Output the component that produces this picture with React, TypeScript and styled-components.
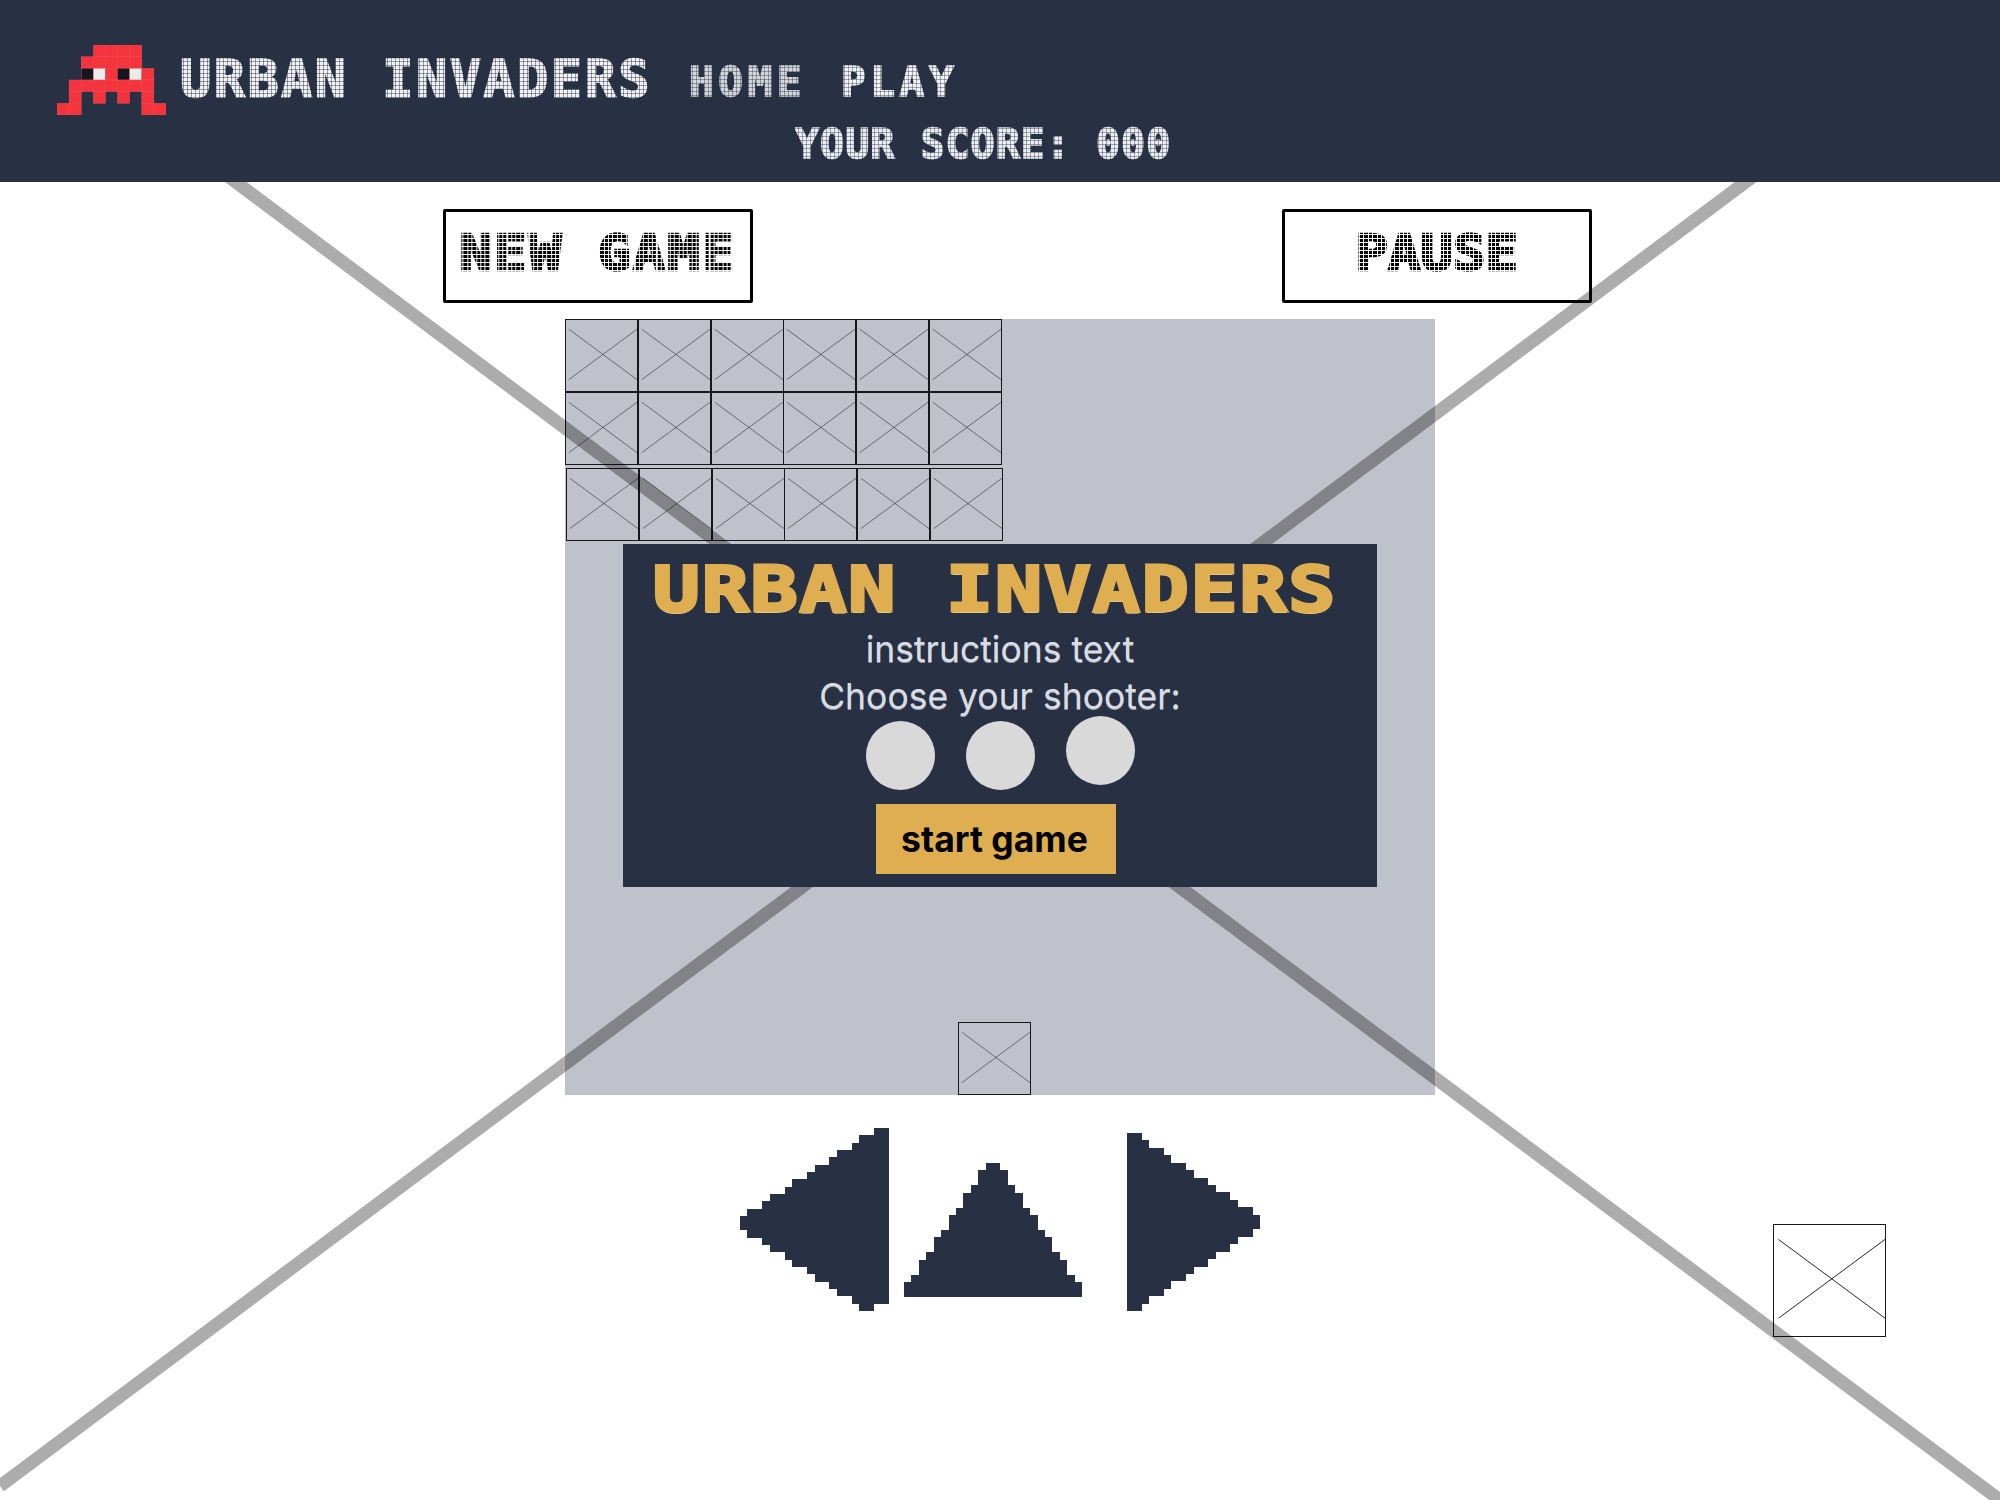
import styled, { createGlobalStyle, css } from "styled-components";

const NAVY = "#283044";
const GOLD = "#deae50";
const MONO = '"DejaVu Sans Mono", "Liberation Mono", monospace';

const GlobalStyle = createGlobalStyle`
  html, body {
    margin: 0;
    background: #ffffff;
  }
  * {
    box-sizing: border-box;
  }
`;

// dot grid laid over the letters, the mask keeps the text real
const pixelDots = (gap: number, stroke: number) => css`
  font-family: ${MONO};
  font-weight: 700;
  line-height: 1;
  white-space: pre;
  -webkit-text-stroke: ${stroke}px currentColor;
  mask-image:
    repeating-linear-gradient(90deg, #000 0 3px, rgba(0, 0, 0, ${gap}) 3px 4px),
    repeating-linear-gradient(0deg, #000 0 3px, rgba(0, 0, 0, ${gap}) 3px 4px);
  mask-composite: intersect;
  -webkit-mask-composite: source-in;
`;

const Page = styled.div`
  position: relative;
  width: 2000px;
  height: 1500px;
  overflow: hidden;
  display: flex;
  flex-direction: column;
`;

const BackdropCross = styled.svg`
  position: absolute;
  inset: 0;
  z-index: 1;
  pointer-events: none;
`;

const Header = styled.header`
  position: relative;
  z-index: 2;
  height: 182px;
  flex: none;
  display: flex;
  gap: 14px;
  padding: 45px 0 0 57px;
  background: ${NAVY};
`;

const Logo = styled.svg`
  width: 109px;
  height: 70px;
  flex: none;
`;

const HeaderText = styled.div`
  display: flex;
  flex-direction: column;
`;

const TopRow = styled.div`
  display: flex;
  align-items: flex-start;
`;

const Brand = styled.div`
  ${pixelDots(0.55, 1.6)}
  margin-top: 8px;
  font-size: 52px;
  letter-spacing: 2.4px;
  color: #f2f3f5;
`;

const NavLink = styled.a<{ $dim?: boolean }>`
  ${pixelDots(0.6, 1.6)}
  margin-top: 17px;
  margin-left: ${(p) => (p.$dim ? 37 : 35)}px;
  font-size: 41px;
  letter-spacing: 4.6px;
  color: ${(p) => (p.$dim ? "#d4d5d8" : "#f2f3f5")};
`;

const Score = styled.div`
  ${pixelDots(0.6, 1.6)}
  margin: 19px 0 0 615px;
  font-size: 40px;
  letter-spacing: 1px;
  color: #eceef2;
`;

const Toolbar = styled.div`
  display: flex;
  gap: 529px;
  padding: 27px 0 0 443px;
`;

const GameButton = styled.button`
  display: flex;
  justify-content: center;
  align-items: flex-start;
  width: 310px;
  height: 94px;
  padding: 17px 0 0;
  border: 3px solid #000000;
  border-radius: 2px;
  background: #ffffff;
`;

const ButtonLabel = styled.span<{ $spacing: number }>`
  ${pixelDots(0.05, 2.5)}
  display: block;
  font-size: 49px;
  letter-spacing: ${(p) => p.$spacing}px;
  color: #000000;
  transform: scaleX(1.1);
`;

const Board = styled.section`
  position: relative;
  width: 870px;
  height: 776px;
  flex: none;
  margin: 16px 0 0 565px;
  display: flex;
  flex-direction: column;
  background: #bfc2ca;
`;

const CellRow = styled.div<{ $shifted?: boolean }>`
  display: grid;
  grid-template-columns: repeat(6, 72.8px);
  margin: ${(p) => (p.$shifted ? "3px 0 0 1px" : "0")};
`;

const Placeholder = styled.div<{ $size: number }>`
  width: ${(p) => p.$size}px;
  height: ${(p) => p.$size}px;
  border: 1px solid #15171c;
  flex: none;
`;

const PlaceholderCross = styled.svg<{ $soft?: boolean }>`
  display: block;
  width: 100%;
  height: 100%;
  stroke: ${(p) => (p.$soft ? "rgba(30, 32, 40, 0.55)" : "#24262c")};
`;

const Ship = styled.div`
  margin: auto 0 0 393px;
`;

const Popup = styled.div`
  position: absolute;
  z-index: 2;
  left: 58px;
  top: 225px;
  width: 754px;
  height: 343px;
  display: flex;
  flex-direction: column;
  align-items: center;
  background: ${NAVY};
`;

const PopupTitle = styled.h1`
  margin: 14px 9px 0 0;
  font-family: ${MONO};
  font-weight: 700;
  font-size: 63px;
  line-height: 1;
  letter-spacing: 1.5px;
  white-space: pre;
  color: ${GOLD};
  -webkit-text-stroke: 3px ${GOLD};
  text-shadow: 0 2px 0 #f3e2bb;
  transform: scaleX(1.24);
`;

const PopupLine = styled.p<{ $top: number }>`
  margin: ${(p) => p.$top}px 0 0;
  font-family: Inter, "Noto Sans", sans-serif;
  font-size: 35.5px;
  line-height: 40px;
  color: #d9dce2;
  text-shadow: 0 1px 0 #8f95a5;
`;

const Shooters = styled.div`
  display: flex;
  align-items: flex-end;
  gap: 31px;
  margin-top: -1px;
`;

const Shooter = styled.div<{ $raised?: boolean }>`
  width: 69px;
  height: 69px;
  margin-bottom: ${(p) => (p.$raised ? 5 : 0)}px;
  border-radius: 50%;
  background: #d9d9d9;
`;

const StartButton = styled.button`
  width: 240px;
  height: 70px;
  margin: 14px 8px 0 0;
  padding: 0 3px 0 0;
  border: none;
  background: ${GOLD};
  font-family: Inter, "Noto Sans", sans-serif;
  font-weight: 700;
  font-size: 35.5px;
  color: #000000;
`;

const Controls = styled.div`
  display: flex;
  align-items: flex-start;
  padding: 33px 0 0 740px;
`;

const Arrow = styled.svg<{ $w: number; $h: number; $left: number; $top: number }>`
  width: ${(p) => p.$w}px;
  height: ${(p) => p.$h}px;
  margin: ${(p) => p.$top}px 0 0 ${(p) => p.$left}px;
  flex: none;
  fill: ${NAVY};
  shape-rendering: crispEdges;
`;

const CornerBox = styled.div`
  margin: 96px 0 0 513px;
`;

const HALVES = [1, 2, 2, 3, 4, 4, 5, 6, 6, 7, 8, 8, 9, 10, 10, 11, 12, 12];

const INVADER = [
  "...rrrr..",
  "..rrrrr..",
  "..dwrdwr.",
  ".rrrrrrr.",
  ".r.r.r.r.",
  "rr.....rr",
];

const INVADER_COLORS: Record<string, string> = {
  r: "#f4333c",
  d: "#14161f",
  w: "#e9ecea",
};

const CrossLines = ({ soft }: { soft?: boolean }) => (
  <PlaceholderCross $soft={soft} viewBox="0 0 100 100" preserveAspectRatio="none">
    <line x1="4" y1="13" x2="100" y2="84" strokeWidth="1" vectorEffect="non-scaling-stroke" />
    <line x1="4" y1="84" x2="100" y2="13" strokeWidth="1" vectorEffect="non-scaling-stroke" />
  </PlaceholderCross>
);

const Invader = () => (
  <Logo viewBox="0 0 9 6" preserveAspectRatio="none">
    {INVADER.flatMap((row, y) =>
      row.split("").map((c, x) =>
        c === "." ? null : (
          <rect
            key={`${x}-${y}`}
            x={x}
            y={y}
            width="1"
            height="1"
            fill={INVADER_COLORS[c]}
            stroke="#ff5a60"
            strokeWidth="0.03"
          />
        ),
      ),
    )}
  </Logo>
);

const Row = ({ shifted }: { shifted?: boolean }) => (
  <CellRow $shifted={shifted}>
    {[0, 1, 2, 3, 4, 5].map((i) => (
      <Placeholder key={i} $size={73}>
        <CrossLines soft />
      </Placeholder>
    ))}
  </CellRow>
);

const App = () => {
  return (
    <Page>
      <GlobalStyle />
      <BackdropCross width="2000" height="1500" viewBox="0 0 2000 1500">
        <line x1="0" y1="6" x2="2000" y2="1500" stroke="rgba(0,0,0,0.325)" strokeWidth="13" />
        <line x1="0" y1="1486" x2="2000" y2="-8" stroke="rgba(0,0,0,0.325)" strokeWidth="13" />
      </BackdropCross>

      <Header>
        <Invader />
        <HeaderText>
          <TopRow>
            <Brand>URBAN INVADERS</Brand>
            <NavLink $dim>HOME</NavLink>
            <NavLink>PLAY</NavLink>
          </TopRow>
          <Score>YOUR SCORE: 000</Score>
        </HeaderText>
      </Header>

      <Toolbar>
        <GameButton>
          <ButtonLabel $spacing={2}>NEW GAME</ButtonLabel>
        </GameButton>
        <GameButton>
          <ButtonLabel $spacing={0}>PAUSE</ButtonLabel>
        </GameButton>
      </Toolbar>

      <Board>
        <Row />
        <Row />
        <Row shifted />
        <Ship>
          <Placeholder $size={73}>
            <CrossLines soft />
          </Placeholder>
        </Ship>
        <Popup>
          <PopupTitle>URBAN INVADERS</PopupTitle>
          <PopupLine $top={9}>instructions text</PopupLine>
          <PopupLine $top={7}>Choose your shooter:</PopupLine>
          <Shooters>
            <Shooter />
            <Shooter />
            <Shooter $raised />
          </Shooters>
          <StartButton>start game</StartButton>
        </Popup>
      </Board>

      <Controls>
        <Arrow $w={149} $h={183} $left={0} $top={0} viewBox="0 0 20 25" preserveAspectRatio="none">
          {HALVES.map((h, i) => (
            <rect key={i} x={i} y={13 - h} width="1" height={h * 2} />
          ))}
          <rect x="18" y="0" width="2" height="24" />
        </Arrow>
        <Arrow $w={178} $h={134} $left={15} $top={35} viewBox="0 0 24 18" preserveAspectRatio="none">
          {HALVES.map((h, i) => (
            <rect key={i} x={12 - h} y={i} width={h * 2} height="1" />
          ))}
        </Arrow>
        <Arrow $w={133} $h={178} $left={45} $top={5} viewBox="0 0 18 24" preserveAspectRatio="none">
          {HALVES.map((h, i) => (
            <rect key={i} x={17 - i} y={12 - h} width="1" height={h * 2} />
          ))}
        </Arrow>
        <CornerBox>
          <Placeholder $size={113}>
            <CrossLines />
          </Placeholder>
        </CornerBox>
      </Controls>
    </Page>
  );
};

export default App;
